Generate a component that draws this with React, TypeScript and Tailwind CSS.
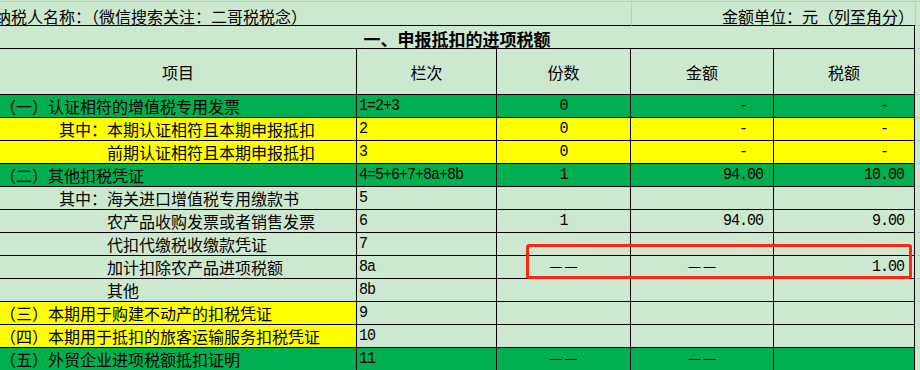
import React from "react";

type Row = {
  label: string;
  indent: 0 | 1 | 2;
  code: string;
  n?: string;
  amt?: string;
  tax?: string;
  bg: "lg" | "dg" | "y";
  labelBg?: "lg" | "dg" | "y";
};

const BG: Record<string, string> = {
  lg: "bg-[#cce8cf]",
  dg: "bg-[#00b050]",
  y: "bg-[#ffff00]",
};

const IND = ["pl-0", "pl-[59px]", "pl-[107px]"];

const rows: Row[] = [
  { label: "（一）认证相符的增值税专用发票", indent: 0, code: "1=2+3", n: "0", amt: "-", tax: "-", bg: "dg" },
  { label: "其中：本期认证相符且本期申报抵扣", indent: 1, code: "2", n: "0", amt: "-", tax: "-", bg: "y" },
  { label: "前期认证相符且本期申报抵扣", indent: 2, code: "3", n: "0", amt: "-", tax: "-", bg: "y" },
  { label: "（二）其他扣税凭证", indent: 0, code: "4=5+6+7+8a+8b", n: "1", amt: "94.00", tax: "10.00", bg: "dg" },
  { label: "其中：海关进口增值税专用缴款书", indent: 1, code: "5", bg: "lg" },
  { label: "农产品收购发票或者销售发票", indent: 2, code: "6", n: "1", amt: "94.00", tax: "9.00", bg: "lg" },
  { label: "代扣代缴税收缴款凭证", indent: 2, code: "7", bg: "lg" },
  { label: "加计扣除农产品进项税额", indent: 2, code: "8a", n: "——", amt: "——", tax: "1.00", bg: "lg" },
  { label: "其他", indent: 2, code: "8b", bg: "lg" },
  { label: "（三）本期用于购建不动产的扣税凭证", indent: 0, code: "9", bg: "lg", labelBg: "y" },
  { label: "（四）本期用于抵扣的旅客运输服务扣税凭证", indent: 0, code: "10", bg: "lg", labelBg: "y" },
  { label: "（五）外贸企业进项税额抵扣证明", indent: 0, code: "11", n: "——", amt: "——", bg: "dg" },
];

const CJK = "font-['Noto_Sans_CJK_SC',sans-serif]";
const MONO =
  "inline-block font-['Liberation_Mono',monospace] text-[15px] tracking-[-1px] leading-none scale-y-[1.16] origin-bottom whitespace-nowrap";
const GRID = "border-[#bccad8]";

function Dash() {
  return (
    <span className="font-['Liberation_Sans',sans-serif] text-[12px] tracking-[3px] pl-[3px] leading-none mb-[3px]">——</span>
  );
}

function Num({ v, dashPad }: { v?: string; dashPad?: boolean }) {
  if (!v) return null;
  if (v === "——") return <Dash />;
  return <span className={`${MONO} ${dashPad ? "pr-[16px]" : ""}`}>{v}</span>;
}

function DataRow({ r }: { r: Row }) {
  const bg = BG[r.bg];
  const lbg = BG[r.labelBg ?? r.bg];
  return (
    <div className="flex h-[23px] text-black">
      <div className={`w-[357px] shrink-0 border-r border-b border-black flex items-center ${lbg} ${IND[r.indent]}`}>
        <span className={`${CJK} text-[16px] leading-none whitespace-nowrap`}>{r.label}</span>
      </div>
      <div className={`w-[140px] shrink-0 border-r border-b border-black flex items-end pb-[2px] pl-[2px] ${bg}`}>
        <span className={MONO}>{r.code}</span>
      </div>
      <div className={`w-[134px] shrink-0 border-r border-b border-black flex items-end pb-[2px] justify-center ${bg}`}>
        <Num v={r.n} />
      </div>
      <div
        className={`w-[143px] shrink-0 border-r border-b border-black flex items-end pb-[2px] ${
          r.amt === "——" ? "justify-center" : "justify-end pr-[10px]"
        } ${bg}`}
      >
        <Num v={r.amt} dashPad={r.amt === "-"} />
      </div>
      <div className={`w-[141px] shrink-0 border-r border-b border-black flex items-end pb-[2px] justify-end pr-[10px] ${bg}`}>
        <Num v={r.tax} dashPad={r.tax === "-"} />
      </div>
      <div className={`flex-1 bg-[#cce8cf] border-b ${GRID}`} />
    </div>
  );
}

export default function App() {
  return (
    <div className="w-[920px] h-[370px] overflow-hidden bg-[#cce8cf] relative">
      {/* top grid strip */}
      <div className="flex h-[2px]">
        <div className={`w-[34px] border-r border-b ${GRID}`} />
        <div className={`w-[108px] border-r border-b ${GRID}`} />
        <div className={`w-[215px] border-r border-b ${GRID}`} />
        <div className={`w-[140px] border-r border-b ${GRID}`} />
        <div className={`w-[134px] border-r border-b ${GRID}`} />
        <div className={`w-[284px] border-r border-b ${GRID}`} />
        <div className={`flex-1 border-b ${GRID}`} />
      </div>
      {/* taxpayer row */}
      <div className="flex h-[24px]">
        <div className="w-[631px] shrink-0 border-b border-b-black flex items-end pb-[1px]">
          <span className={`${CJK} text-[16px] leading-none whitespace-nowrap -ml-[5px]`}>
            纳税人名称：（微信搜索关注：二哥税税念）
          </span>
        </div>
        <div className="w-[284px] shrink-0 border-b border-b-black border-l border-l-[#bccad8] flex items-end justify-end pb-[1px] pr-[1px]">
          <span className={`${CJK} text-[16px] leading-none whitespace-nowrap`}>金额单位：元（列至角分）</span>
        </div>
        <div className="flex-1 border-b border-l border-[#bccad8]" />
      </div>
      {/* title row */}
      <div className="flex h-[23px]">
        <div className="w-[915px] shrink-0 border-r border-b border-black flex items-end justify-center pb-[1px]">
          <span className={`${CJK} text-[17px] font-bold leading-none whitespace-nowrap`}>一、申报抵扣的进项税额</span>
        </div>
        <div className={`flex-1 border-b ${GRID}`} />
      </div>
      {/* header row */}
      <div className="flex h-[46px]">
        {[
          ["项目", "w-[357px]"],
          ["栏次", "w-[140px]"],
          ["份数", "w-[134px]"],
          ["金额", "w-[143px]"],
          ["税额", "w-[141px]"],
        ].map(([t, w]) => (
          <div key={t} className={`${w} shrink-0 border-r border-b border-black flex items-center justify-center pt-[1px]`}>
            <span className={`${CJK} text-[16px] leading-none`}>{t}</span>
          </div>
        ))}
        <div className={`flex-1 border-b ${GRID}`} />
      </div>
      {rows.map((r, i) => (
        <DataRow key={i} r={r} />
      ))}
      {/* red annotation box */}
      <div className="absolute left-[526px] top-[244px] w-[386px] h-[35px] border-[3px] border-[#ff2418] rounded-[3px]" />
    </div>
  );
}
